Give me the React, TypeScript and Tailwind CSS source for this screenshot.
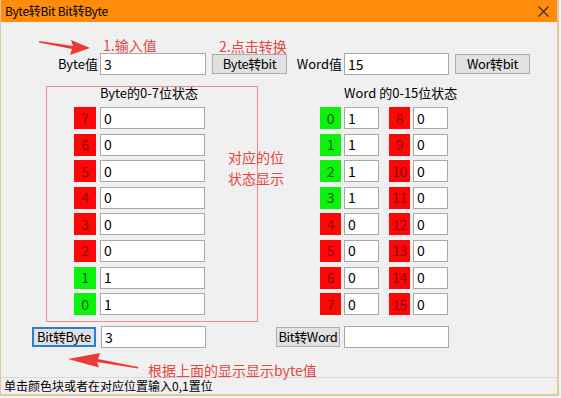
import React from "react";

const FONT = { fontFamily: '"Noto Sans CJK SC", "Microsoft YaHei", sans-serif' };

const byteBits = [
  { n: 7, v: 0 },
  { n: 6, v: 0 },
  { n: 5, v: 0 },
  { n: 4, v: 0 },
  { n: 3, v: 0 },
  { n: 2, v: 0 },
  { n: 1, v: 1 },
  { n: 0, v: 1 },
];

const wordLow = [0, 1, 2, 3, 4, 5, 6, 7].map((n) => ({ n, v: n < 4 ? 1 : 0 }));
const wordHigh = [8, 9, 10, 11, 12, 13, 14, 15].map((n) => ({ n, v: 0 }));

function BitBox({ n, v, w }: { n: number; v: number; w: string }) {
  return (
    <div
      className={`${w} h-full flex items-center justify-center text-[14px] tracking-[-0.5px] ${
        v ? "bg-[#0cf20c] text-[#0a5a0a]" : "bg-[#fc0606] text-[#8c0c0c]"
      }`}
    >
      {n}
    </div>
  );
}

function Field({ value, w }: { value: string; w: string }) {
  return (
    <div className={`${w} h-full bg-white border border-[#a8a8a8] pl-[3px] flex items-center text-[14px] text-black`}>
      {value}
    </div>
  );
}

function Btn({ label, w, focused }: { label: string; w: string; focused?: boolean }) {
  return (
    <div
      className={`${w} h-[20px] flex items-center justify-center whitespace-nowrap text-[13px] tracking-[-0.4px] text-black bg-[#e1e1e1] ${
        focused ? "border-2 border-[#2a7fd4]" : "border border-[#adadad]"
      }`}
    >
      {label}
    </div>
  );
}

export default function App() {
  return (
    <div className="w-[561px] h-[398px] bg-[#f3f3f3] relative overflow-hidden" style={FONT}>
      <div className="w-[559px] h-[396px] flex flex-col border-l border-r-2 border-b-2 border-[#e0c9a2] bg-[#f0f0f0] relative">
        {/* title bar */}
        <div className="h-[22px] bg-[#ff8c0a] flex items-center justify-between pl-[4px] pr-[6px] shrink-0">
          <span className="text-[12px] text-black tracking-[-0.3px]">Byte转Bit Bit转Byte</span>
          <svg width="11" height="11" viewBox="0 0 11 11" className="mr-[2px]">
            <path d="M0.5 0.5 L10.5 10.5 M10.5 0.5 L0.5 10.5" stroke="#3a2a1a" strokeWidth="1.1" />
          </svg>
        </div>

        {/* input row */}
        <div className="flex items-center h-[22px] mt-[31px] text-[13px] text-black">
          <div className="w-[99px] text-right pr-[2px]">Byte值</div>
          <Field value="3" w="w-[106px]" />
          <div className="ml-[6px]">
            <Btn label="Byte转bit" w="w-[75px]" />
          </div>
          <div className="w-[57px] text-right pr-[2px]">Word值</div>
          <Field value="15" w="w-[105px]" />
          <div className="ml-[6px]">
            <Btn label="Wor转bit" w="w-[75px]" />
          </div>
        </div>

        {/* bit panels */}
        <div className="flex mt-[9px]">
          <div className="ml-[73px] w-[131px] flex flex-col">
            <div className="h-[18px] pl-[26px] text-[13px] text-black leading-[18px] whitespace-nowrap">Byte的0-7位状态</div>
            <div className="flex flex-col gap-[4.6px] mt-[5px]">
              {byteBits.map((b) => (
                <div key={b.n} className="flex h-[22px] gap-[4px]">
                  <BitBox n={b.n} v={b.v} w="w-[22px]" />
                  <Field value={String(b.v)} w="w-[105px]" />
                </div>
              ))}
            </div>
          </div>
          <div className="ml-[115px] flex flex-col">
            <div className="h-[18px] pl-[24px] text-[13px] text-black leading-[18px] whitespace-nowrap">Word 的0-15位状态</div>
            <div className="flex gap-[10px] mt-[5px]">
              {[wordLow, wordHigh].map((col, i) => (
                <div key={i} className="flex flex-col gap-[4.6px]">
                  {col.map((b) => (
                    <div key={b.n} className="flex h-[22px] gap-[3px]">
                      <BitBox n={b.n} v={b.v} w="w-[21px]" />
                      <Field value={String(b.v)} w="w-[35px]" />
                    </div>
                  ))}
                </div>
              ))}
            </div>
          </div>
        </div>

        {/* convert back row */}
        <div className="flex items-center h-[22px] mt-[11px]">
          <div className="ml-[31px]">
            <Btn label="Bit转Byte" w="w-[64px]" focused />
          </div>
          <div className="ml-[5px] h-full">
            <Field value="3" w="w-[105px]" />
          </div>
          <div className="ml-[70px]">
            <Btn label="Bit转Word" w="w-[64px]" />
          </div>
          <div className="ml-[4px] h-full">
            <Field value="" w="w-[105px]" />
          </div>
        </div>

        <div className="flex-1" />

        {/* status bar */}
        <div className="h-[17px] border-t border-[#dadada] flex items-center pl-[3px] text-[12px] text-black shrink-0">
          单击颜色块或者在对应位置输入0,1置位
        </div>

        {/* annotations */}
        <div className="absolute left-[45px] top-[86px] w-[212px] h-[236px] border border-[#ee8a8a] pointer-events-none" />
        <div className="absolute left-[102px] top-[36px] text-[14px] text-[#e4453f] leading-[18px]">1.输入值</div>
        <div className="absolute left-[218px] top-[38px] text-[14px] text-[#e4453f] leading-[16px]">2.点击转换</div>
        <div className="absolute left-[227px] top-[147px] text-[14px] text-[#e4453f] leading-[21px]">
          对应的位
          <br />
          状态显示
        </div>
        <div className="absolute left-[147px] top-[361px] text-[14px] text-[#e4453f] leading-[18px]">
          根据上面的显示显示byte值
        </div>
        <svg className="absolute left-[36px] top-[36px]" width="56" height="20" viewBox="0 0 56 20">
          <path d="M2 5 L36 10 L34 4 L53 12 L33 19 L35 13 L2 6.5 Z" fill="#ea3a36" />
        </svg>
        <svg className="absolute left-[64px] top-[352px]" width="76" height="22" viewBox="0 0 76 22">
          <path d="M73 16.5 L32 10 L34 15.5 L3 7 L35 1 L33 7 L73 15 Z" fill="#ea3a36" />
        </svg>
      </div>
    </div>
  );
}
